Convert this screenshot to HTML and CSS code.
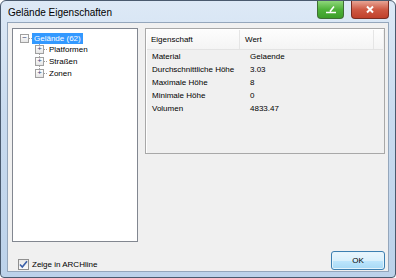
FILE: index.html
```html
<!DOCTYPE html>
<html lang="de">
<head>
  <meta charset="UTF-8" />
  <title>Gelände Eigenschaften</title>
  <link rel="stylesheet" href="styles.css">
</head>
<body>

<div class="window">
  <div class="titlebar">
    <span class="title">Gelände Eigenschaften</span>
    <div class="caption-btns">
      <div class="cap-btn green">
        <svg width="12" height="9" viewBox="0 0 12 9"><path d="M1 7.5h10M5 6.5l4-5" stroke="#fff" stroke-width="1.6" fill="none"/></svg>
      </div>
      <div class="cap-btn red">
        <svg width="10" height="9" viewBox="0 0 10 9"><path d="M2 1.5l6 6M8 1.5l-6 6" stroke="#fff" stroke-width="2" fill="none"/></svg>
      </div>
    </div>
  </div>

  <div class="client">
    <div class="panels">
      <div class="tree">
        <div class="node root">
          <span class="box">&minus;</span>
          <span class="hline"></span>
          <span class="label sel">Gelände (62)</span>
        </div>
        <div class="children">
          <div class="node"><span class="box">+</span><span class="hline"></span><span class="label">Platformen</span></div>
          <div class="node"><span class="box">+</span><span class="hline"></span><span class="label">Straßen</span></div>
          <div class="node"><span class="box">+</span><span class="hline"></span><span class="label">Zonen</span></div>
        </div>
      </div>

      <div class="props">
        <div class="row head">
          <span class="c1">Eigenschaft</span>
          <span class="c2">Wert</span>
          <span class="c3"></span>
        </div>
        <div class="row"><span class="c1">Material</span><span class="c2">Gelaende</span></div>
        <div class="row"><span class="c1">Durchschnittliche Höhe</span><span class="c2">3.03</span></div>
        <div class="row"><span class="c1">Maximale Höhe</span><span class="c2">8</span></div>
        <div class="row"><span class="c1">Minimale Höhe</span><span class="c2">0</span></div>
        <div class="row"><span class="c1">Volumen</span><span class="c2">4833.47</span></div>
      </div>
    </div>

    <div class="footer">
      <label class="check">
        <span class="checkbox">
          <svg width="9" height="9" viewBox="0 0 9 9"><path d="M1 4.5l2.3 2.5L8 1.2" stroke="#3a5fa8" stroke-width="1.6" fill="none"/></svg>
        </span>
        Zeige in ARCHline
      </label>
      <button class="ok">OK</button>
    </div>
  </div>
</div>

</body>
</html>
```

FILE: styles.css
```css
html, body {
  margin: 0; padding: 0;
  width: 396px; height: 278px;
  overflow: hidden;
  background: #fff;
  font-family: "Liberation Sans", Arial, sans-serif;
  font-size: 8px;
  color: #000;
}

.window {
  box-sizing: border-box;
  width: 396px;
  height: 278px;
  border: 1px solid #4a5a6e;
  border-radius: 6px 6px 4px 4px;
  background: linear-gradient(#dde9f6, #c9dbef 40%, #bcd2ea);
  display: flex;
  flex-direction: column;
  padding: 0 6px 5px 6px;
}

.titlebar {
  height: 21px;
  display: flex;
  align-items: flex-start;
  justify-content: space-between;
}

.title {
  font-size: 10px;
  margin: 6px 0 0 1px;
  color: #000;
}

.caption-btns {
  display: flex;
  gap: 7px;
}

.cap-btn {
  height: 18px;
  border: 1px solid #4b5d6f;
  border-top: none;
  border-radius: 0 0 4px 4px;
  display: flex;
  align-items: center;
  justify-content: center;
  box-sizing: border-box;
}

.cap-btn.green {
  width: 27px;
  background: linear-gradient(#8ed77a, #4fb23a 50%, #3c9e2a);
  border-color: #3f6e34;
}

.cap-btn.red {
  width: 38px;
  background: linear-gradient(#e8a494, #cf5a44 50%, #c0412c);
  border-color: #7a2d22;
}

.client {
  flex: 1;
  background: #f0f0f0;
  border: 1px solid #94a6bb;
  padding: 5px 3px 1px 4px;
  display: flex;
  flex-direction: column;
}

.panels {
  display: flex;
  gap: 7px;
  align-items: flex-start;
}

.tree {
  box-sizing: border-box;
  width: 126px;
  height: 214px;
  background: #fff;
  border: 1px solid #828790;
  padding: 3px 0 0 7px;
}

.node {
  height: 12px;
  display: flex;
  align-items: center;
}

.box {
  box-sizing: border-box;
  width: 9px;
  height: 9px;
  border: 1px solid #a0a0a0;
  background: linear-gradient(#fff, #e6e6e6);
  font-size: 8px;
  line-height: 6px;
  text-align: center;
  color: #3a4a7a;
  flex: none;
}

.hline {
  width: 3px;
  border-top: 1px dotted #a0a0a0;
  flex: none;
}

.label {
  padding: 0 2px;
  line-height: 11px;
  white-space: nowrap;
}

.label.sel {
  background: #3399ff;
  color: #fff;
}

.children {
  margin-left: 19px;
  border-left: 1px dotted #a0a0a0;
  height: 30px;
  width: 100px;
  margin-top: -1px;
}

.children .node {
  margin-left: -5px;
}

.children .node:first-child {
  margin-top: -1px;
}

.props {
  box-sizing: border-box;
  width: 242px;
  height: 126px;
  border: 1px solid #a8a8a8;
  box-shadow: inset 1px 1px 0 #fff;
  padding: 1px 2px;
}

.row {
  display: flex;
  height: 13px;
  align-items: center;
}

.row .c1 {
  width: 93px;
  padding-left: 4px;
  white-space: nowrap;
}

.row .c2 {
  padding-left: 5px;
}

.row.head {
  height: 19px;
  background: linear-gradient(#fdfdfd, #f4f4f4);
  border-bottom: 1px solid #e3e3e3;
  margin: 0 -1px 0 -1px;
}

.row.head .c1 {
  height: 19px;
  line-height: 19px;
  border-right: 1px solid #e5e5e5;
  width: 88px;
}

.row.head .c2 {
  flex: 1;
  height: 19px;
  line-height: 19px;
  border-right: 1px solid #e5e5e5;
}

.row.head .c3 {
  width: 9px;
}

.footer {
  margin-top: auto;
  display: flex;
  align-items: flex-end;
  justify-content: space-between;
}

.check {
  display: flex;
  align-items: center;
  gap: 3px;
  margin: 0 0 0 6px;
}

.checkbox {
  box-sizing: border-box;
  width: 11px;
  height: 11px;
  border: 1px solid #8f8f8f;
  background: linear-gradient(#e8e8e8, #fbfbfb);
  display: flex;
  align-items: center;
  justify-content: center;
}

.ok {
  width: 54px;
  height: 19px;
  font-family: inherit;
  font-size: 8px;
  border: 1px solid #3c7fb1;
  border-radius: 3px;
  background: linear-gradient(#eaf6fd, #d9f0fc 50%, #bee6fd 51%, #a7d9f5);
  box-shadow: inset 0 0 0 1px #e4f4fc;
  padding: 0;
  color: #000;
}
```
